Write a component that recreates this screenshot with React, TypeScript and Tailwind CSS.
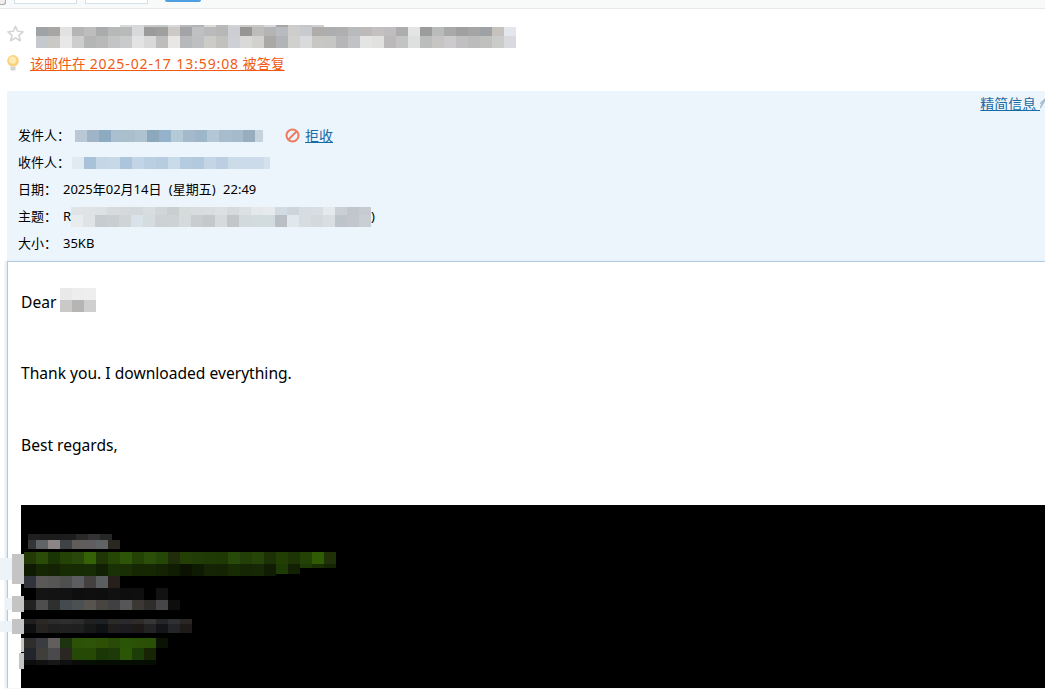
import React from "react";

type Strip = { x: number; y: number; h: number; c: string[]; w?: number };

function Mosaic({ strips, width, height, ox = 0, oy = 0, className = "" }: { strips: Strip[]; width: number; height: number; ox?: number; oy?: number; className?: string }) {
  return (
    <svg width={width} height={height} viewBox={`${ox} ${oy} ${width} ${height}`} shapeRendering="crispEdges" className={className}>
      {strips.map((s, i) =>
        s.c.map((col, j) => (
          <rect key={`${i}-${j}`} x={s.x + j * (s.w ?? 12)} y={s.y} width={s.w ?? 12} height={s.h} fill={`#${col}`} />
        ))
      )}
    </svg>
  );
}

const w = (s: string) => s.split(",");

const titleStrips: Strip[] = [
  { x: 120, y: 25, h: 2, c: w("dadada,d6d7d7,c8caca,c6c8c8,d8d9da,b8b8b8,b4b4b4,dddbd9,b9babb,d2d3d4,c9c9c9,c8c8c8,d8d9dc,a8a7a6,cccbca,c6c6c6,ced0d2") },
  { x: 36, y: 27, h: 9, c: w("a0a3a6,a8a6a5,e2e2e2,b5b5b5,bcbdbc,a9abad,b7b9b9,b8baba,d8d9db,9c9b9c,9f9f9f,cdc9c7,a3a4a7,bfc0c2,b9babb,b7b7b6,cdced3,969593,bdbcba,b4b4b4,b8bcc0,cfcdcb,c7cbcf,b0acaa,abadaf,b0aeae,b9babc,bfbaba,c2c0c0,bfbdc0,adadad,e3e4e6,9c9c9c,b9bbbb,a9a9a9,a0a0a0,a5a5a6,9fa2a5,c6c3bf,e4e6ee") },
  { x: 36, y: 36, h: 12, c: w("c5c8cc,cbc9c6,e8e8e8,cdcdcd,b4b6b5,b9b9b9,c3c4c4,c8cacc,e3e3e3,d9d9d9,bdbdbd,e8e7e6,b7b8b9,bdbfc1,cbcbc8,c2c1be,cfd0d5,d9d9d9,d2d1cd,aaa9a7,b3b4b8,d0d0ce,d8dadc,c9c7c4,c6c6c4,b6b6b8,c1c2c5,e4e4e5,e1e1df,bcb9bb,c3c3c3,dee0e0,bbbcbc,c7c5c4,cbcbce,c1bfbf,bcbcbc,c0c0bf,cbcbc9,d8dae0") },
];

const senderStrips: Strip[] = [
  { x: 0, y: 0, h: 12, c: w("b9c8d4,9fb4c7,8cabc0,a8bfcf,aabfcc,afc2cf,8ba8bd,94b2c9,b5cad7,a4b9cc,9db6ca,b3c7d6,a7bccd,a5bacb,99adc0,c4d3de") },
];
const recipientStrips: Strip[] = [
  { x: 0, y: 0, h: 12, c: w("dfeaf2,a9c1d9,c4d7e6,c7d8e6,adc5dc,c2d4e5,bbcfe2,b8cce0,c9dae8,b5cce0,b2c9de,c4d6e6,bccfe2,cbdbe8,cbdce8,cbdbe9,d4e2ed") },
];
const subjectStrips: Strip[] = [
  { x: 0, y: 0, h: 8, c: w("e0e4e7,dfe3e5,dde1e3,d7dbde,d5d9dc,d3d8da,d8dde0,d2d6d8,c9cecf,d6dadb,d8dcdd,dadddf,dde0e2,d6dadc,dce0e2,e5e8eb,e6eaed,d3dbe2,cdd5dc,d6dde2,d8dde1,e6e9eb,cbced4,c1c5cc,c6cbd2") },
  { x: 0, y: 8, h: 12, c: w("e8ecee,dfe3e6,c6cdd0,c9ced0,cfd4d6,d9e2e8,d4dcdf,cdd1d3,cdd2d4,d6dadc,c9cdcf,c4c8cb,d6dadc,c2c6c9,d3dadc,d2dbde,d2dbdd,b9bfc4,e0e8ed,d5dde1,d3d9dc,d9dfe0,bec4cb,c3c7cd,c9ced4") },
];
const dearStrips: Strip[] = [
  { x: 0, y: 0, h: 12, c: w("e9e9e9,ededed,eeeeee") },
  { x: 0, y: 12, h: 12, c: w("c9c9c9,b7b5b3,cfcfcf") },
];

const sigStrips: Strip[] = [
  { x: 0, y: 558, h: 22, c: w("edf3f7") },
  { x: 12, y: 554, h: 30, c: w("c4c4c4") },
  { x: 6, y: 598, h: 12, w: 6, c: w("edf3f7") },
  { x: 12, y: 596, h: 16, c: w("c4c4c4") },
  { x: 0, y: 621, h: 11, c: w("edf3f7") },
  { x: 12, y: 619, h: 15, c: w("c4c4c4") },
  { x: 21, y: 638, h: 14, w: 3, c: w("c4c4c4") },
  { x: 19, y: 653, h: 16, w: 5, c: w("c4c4c4") },
  { x: 28, y: 534, h: 6, c: w("201f1f,1c1c1c,1a1c1d,1d1d1d,2b2927,333234,262626") },
  { x: 28, y: 540, h: 9, w: 8, c: w("333538") },
  { x: 36, y: 540, h: 9, c: w("606366,8b8585,404346,5f5c59,5f5d60,5f6364,2a2720") },
  { x: 24, y: 552, h: 12, c: w("233a06,2a4c08,1b3404,254206,28480a,366207,1f3706,264606,2d5507,234306,2b4f08,244606,1f2d0a,233f06,213c06,203a06,1f3905,27490a,223f07,244507,1c3206,223e05,1d3505,244205,2f5b05,1f3207") },
  { x: 24, y: 564, h: 12, c: w("0f1a02,142604,132303,162a04,162a03,172b05,112003,1a3005,192e05,152803,152703,132303,111d03,0b1202,0f1a02,142404,142403,172b05,152604,162805,101c03") },
  { x: 276, y: 564, h: 10, c: w("1f3b05,122104") },
  { x: 300, y: 564, h: 4, c: w("1f3b05,1a3004,152503") },
  { x: 24, y: 576, h: 12, c: w("31333d,5b5957,565654,4d504f,5b5d60,444040,5a5e5f,261f1c") },
  { x: 36, y: 588, h: 12, c: w("141414,131313,121212,0e0e0e,0f0f0f,0e0e0e,111111,0e0e0e,0f0f0f,000000,121212") },
  { x: 24, y: 600, h: 10, c: w("222220,4e4e4e,2e3030,434a50,4b5053,57544f,484440,403f42,565658,3b3834,2e2d2b,464649,0e0e0c") },
  { x: 24, y: 619, h: 5, c: w("1f1f21,2b2826,2c2c2c,2f2f2f,2e2c2b,1f2021,1e2123,2c2a28,2a2a2e,2e2b28,363636,25262a,2e3033,2a2623") },
  { x: 24, y: 624, h: 9, c: w("0e0f10,262423,1f1f1f,202020,1f1f1f,161818,0f1214,201d1d,1c1c20,1d1917,232323,141518,252527,1d1a17") },
  { x: 24, y: 638, h: 10, c: w("302e2c,3b3c42,625e5e,1e3310,2c5207,2d5407,2b5006,294b07,2b5506,2b5106,2a5006,0a1303") },
  { x: 24, y: 648, h: 12, c: w("23252d,3f3e3a,4a4a4c,2a2722,254a07,264a06,1a3806,1e3a08,2b5606,1c3d06,172505") },
  { x: 24, y: 660, h: 5, c: w("0c0c0c,111111,171717,0f0f0f,0b0b0a,060f03,050c02,050c02,050c02,050c02,050c02") },
];

function Row({ label, children }: { label: string; children: React.ReactNode }) {
  return (
    <div className="flex h-[27px] items-center">
      <span className="w-[45px] shrink-0 whitespace-nowrap">{label}</span>
      {children}
    </div>
  );
}

export default function App() {
  return (
    <div className="relative h-[689px] w-[1045px] overflow-hidden bg-white text-[13px] text-black [font-family:'Noto_Sans','Noto_Sans_CJK_SC',sans-serif]">
      {/* toolbar strip */}
      <div className="flex h-[9px] items-start border-b border-[#e6eaea] bg-[#f8f9f9]">
        <div className="h-[5px] w-[6px] rounded-br-[3px] border-b border-r border-[#aaaaaa] bg-[#eeeeee]" />
        <div className="ml-2 h-[4px] w-[63px] border-x border-b border-[#d3e0ea] bg-white" />
        <div className="ml-2 h-[4px] w-[63px] border-x border-b border-[#d3e0ea] bg-white" />
        <div className="ml-[17px] h-[2px] w-[36px] rounded-b-[2px] bg-[#4d9fe0]" />
      </div>

      {/* title */}
      <div className="ml-[7px] flex h-[39px] items-start">
        <svg width="17" height="17" viewBox="0 0 17 17" className="mt-[16px]">
          <path d="M8.5 1.3l2.2 5 5.3.5-4 3.6 1.2 5.3-4.7-2.8-4.7 2.8 1.2-5.3-4-3.6 5.3-.5z" fill="#fff" stroke="#d4d4d4" strokeWidth="1.6" strokeLinejoin="round" />
        </svg>
        <Mosaic strips={titleStrips} width={480} height={24} ox={36} oy={24} className="ml-[12px] mt-[15px]" />
      </div>

      {/* replied notice */}
      <div className="ml-[7px] flex h-[30px] items-center">
        <svg width="12" height="16" viewBox="0 0 12 16">
          <circle cx="6" cy="5.8" r="5.8" fill="#f9d27a" />
          <circle cx="5.6" cy="5.2" r="3.6" fill="#fdeab4" />
          <rect x="3.4" y="11.6" width="5.2" height="3.8" rx="1" fill="#d4d4d4" />
        </svg>
        <a className="ml-[11px] whitespace-nowrap text-[14px] text-[#f05a14] underline">
          该邮件在 <span className="tracking-[0.9px]">2025-02-17 13:59:08</span> 被答复
        </a>
      </div>

      {/* info panel */}
      <div className="ml-[7px] mt-[13px] h-[170px] bg-[#ecf5fc] pl-[11px]">
        <div className="flex h-[31px] items-start justify-end pt-[2px]">
          <a className="whitespace-nowrap text-[14px] text-[#1a6aa6] underline">精简信息&nbsp;</a>
          <svg width="5" height="12" viewBox="0 0 5 12" className="mt-[4px] shrink-0">
            <path d="M0 11L5 3M0 7l5-5" stroke="#a9bccb" strokeWidth="1.5" fill="none" />
          </svg>
        </div>
        <Row label="发件人：">
          <Mosaic strips={senderStrips} width={188} height={12} className="ml-[12px] mt-[1px]" />
          <svg width="15" height="15" viewBox="0 0 15 15" className="ml-[22px] shrink-0">
            <circle cx="7.5" cy="7.5" r="6" fill="none" stroke="#ef7b5f" strokeWidth="2" />
            <path d="M3.5 11.5l8-8" stroke="#ef7b5f" strokeWidth="2" />
          </svg>
          <a className="ml-[5px] text-[14px] text-[#1a6aa6] underline">拒收</a>
        </Row>
        <Row label="收件人：">
          <Mosaic strips={recipientStrips} width={198} height={12} className="ml-[9px]" />
        </Row>
        <Row label="日期：">
          <span className="whitespace-nowrap [word-spacing:4px]">2025年02月14日 (星期五) 22:49</span>
        </Row>
        <Row label="主题：">
          <span>R</span>
          <Mosaic strips={subjectStrips} width={300} height={20} className="mt-[1px] shrink-0" />
          <span>)</span>
        </Row>
        <Row label="大小：">
          <span>35KB</span>
        </Row>
      </div>

      {/* message body */}
      <div className="ml-[7px] border-l border-t border-[#b3cbdf] bg-white pl-[13px] text-[15.6px] leading-[36px] text-black shadow-[-2px_0_2px_#dfebf4]">
        <div className="flex h-[93px] items-start pt-[23px]">
          <span className="-mt-[1px]">Dear</span>
          <Mosaic strips={dearStrips} width={36} height={24} className="ml-[4px] mt-[3px]" />
        </div>
        <div className="h-[72px]">Thank you. I downloaded everything.</div>
        <div className="h-[78px]">Best regards,</div>
        <div className="relative h-[183px] bg-black">
          <Mosaic strips={sigStrips} width={345} height={183} oy={505} ox={0} className="absolute -left-[21px] top-0" />
        </div>
      </div>
    </div>
  );
}
